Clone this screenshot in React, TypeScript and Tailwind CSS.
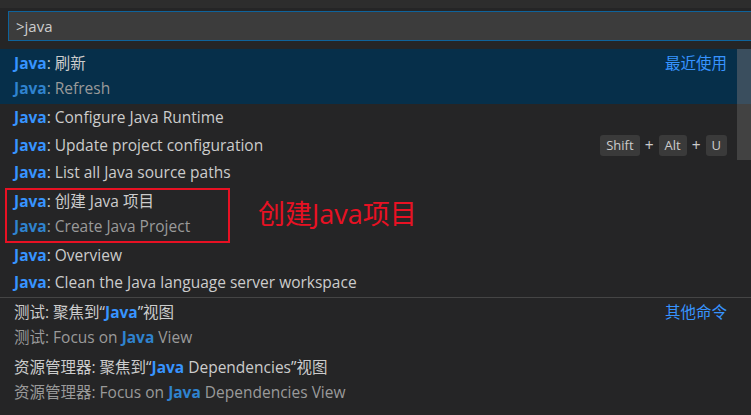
import React from "react";

const J = ({ dim }: { dim?: boolean }) => (
  <span className={`font-bold ${dim ? "text-[#2f83cf]" : "text-[#3794ff]"}`}>Java</span>
);

const Key = ({ k }: { k: string }) => (
  <span className="rounded-[3px] bg-[#3a3a3a] px-[6px] py-[1px] text-[13px] text-[#cccccc]">{k}</span>
);

function Row({ children, right }: { children: React.ReactNode; right?: React.ReactNode }) {
  return (
    <div className="flex h-[27.5px] items-center justify-between pl-[14px] pr-[24px]">
      <div className="text-[#cccccc]">{children}</div>
      {right}
    </div>
  );
}

function Two({ a, b, right, active, box }: { a: React.ReactNode; b: React.ReactNode; right?: React.ReactNode; active?: boolean; box?: boolean }) {
  return (
    <div className={`relative flex h-[55px] flex-col justify-center pl-[14px] pr-[24px] ${active ? "bg-[#062f4a]" : ""}`}>
      <div className="flex items-center justify-between h-[25px]">
        <div className="text-[#cccccc]">{a}</div>
        {right}
      </div>
      <div className="h-[25px] flex items-center text-[#9a9a9a]"><span>{b}</span></div>
      {box && <div className="absolute left-[5px] top-[1px] h-[55px] w-[225px] border-2 border-[#e81123]" />}
    </div>
  );
}

export default function App() {
  return (
    <div className="relative h-[415px] w-[751px] overflow-hidden bg-[#252526] text-[15.5px]" style={{ fontFamily: '"Open Sans","Noto Sans CJK SC",sans-serif' }}>
      <div className="h-[8px] bg-[#2d2d2d]" />
      <div className="px-[8px] pt-[3px] pb-[8px]">
        <div className="-mr-[20px] flex h-[30px] items-center border border-[#0e639c] bg-[#3c3c3c] pl-[7px] text-[15px] text-[#cccccc]">&gt;java</div>
      </div>
      <Two active a={<><J />: 刷新</>} b={<><J dim />: Refresh</>} right={<span className="text-[#3794ff]">最近使用</span>} />
      <Row><J />: Configure Java Runtime</Row>
      <Row right={<span className="flex items-center gap-[5px] text-[#cccccc]"><Key k="Shift" />+<Key k="Alt" />+<Key k="U" /></span>}><J />: Update project configuration</Row>
      <Row><J />: List all Java source paths</Row>
      <Two box a={<><J />: 创建 Java 项目</>} b={<><J dim />: Create Java Project</>} />
      <Row><J />: Overview</Row>
      <Row><J />: Clean the Java language server workspace</Row>
      <div className="border-t border-[#454545]">
        <Two a={<>测试: 聚焦到“<J />”视图</>} b={<>测试: Focus on <J dim /> View</>} right={<span className="text-[#3794ff]">其他命令</span>} />
        <Two a={<>资源管理器: 聚焦到“<J /> Dependencies”视图</>} b={<>资源管理器: Focus on <J dim /> Dependencies View</>} />
      </div>
      <div className="absolute left-[258px] top-[194px] text-[27px] text-[#e81123]">创建Java项目</div>
      <div className="absolute right-0 top-[49px] h-[111px] w-[14px] bg-[#4a4a4a]/80" />
      <div className="absolute right-0 top-[49px] h-[55px] w-[14px] bg-[#3a4e5e]" />
    </div>
  );
}
